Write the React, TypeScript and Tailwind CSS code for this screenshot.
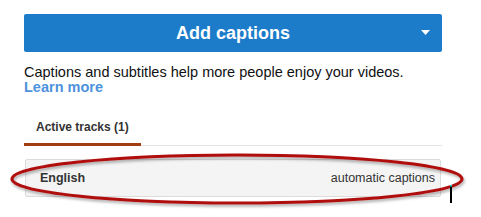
export default function App() {
  return (
    <div className="relative h-[217px] w-[481px] bg-white font-['Liberation_Sans',Arial,sans-serif]">
      <div className="pl-[24px] pr-[39px] pt-[14px]">
        <button
          type="button"
          className="relative flex h-[38px] w-full items-center justify-center rounded-[2px] bg-[#1c7cc9] text-[18px] font-bold text-white"
        >
          Add captions
          <svg className="absolute right-[12px] top-[16px]" width="9" height="6" viewBox="0 0 9 6">
            <path d="M0 0h9L4.5 5z" fill="#fff" />
          </svg>
        </button>

        <p className="mt-[13px] text-[14.5px] leading-[15px] text-[#111]">
          Captions and subtitles help more people enjoy your videos.
        </p>
        <a className="block text-[14.5px] font-bold leading-[15px] text-[#4d92dc]">Learn more</a>

        <div className="mt-[24px] flex border-b border-[#e4e4e4]">
          <div className="-mb-px border-b-[3px] border-[#a23d10] px-[12px] pb-[8px] text-[12px] leading-[16px] font-bold text-[#333]">
            Active tracks (1)
          </div>
        </div>

        <div className="mx-[1px] mt-[13px] flex h-[38px] items-center justify-between rounded-[2px] border border-[#dcdcdc] bg-[#f4f4f4] pl-[14px] pr-[5px] text-[12.5px] text-[#333]">
          <span className="font-bold">English</span>
          <span>automatic captions</span>
        </div>
      </div>

      <svg className="pointer-events-none absolute left-0 top-0" width="481" height="217">
        <defs>
          <filter id="sh" x="-10%" y="-50%" width="120%" height="200%">
            <feDropShadow dx="1" dy="2" stdDeviation="1.5" floodColor="#000" floodOpacity="0.35" />
          </filter>
        </defs>
        <ellipse cx="237" cy="179" rx="225" ry="24" fill="none" stroke="#b00f0f" strokeWidth="3" filter="url(#sh)" />
        <rect x="450" y="186" width="2" height="17" fill="#000" />
        <rect x="450" y="185" width="2" height="1.5" fill="#3cc" />
      </svg>
    </div>
  );
}
